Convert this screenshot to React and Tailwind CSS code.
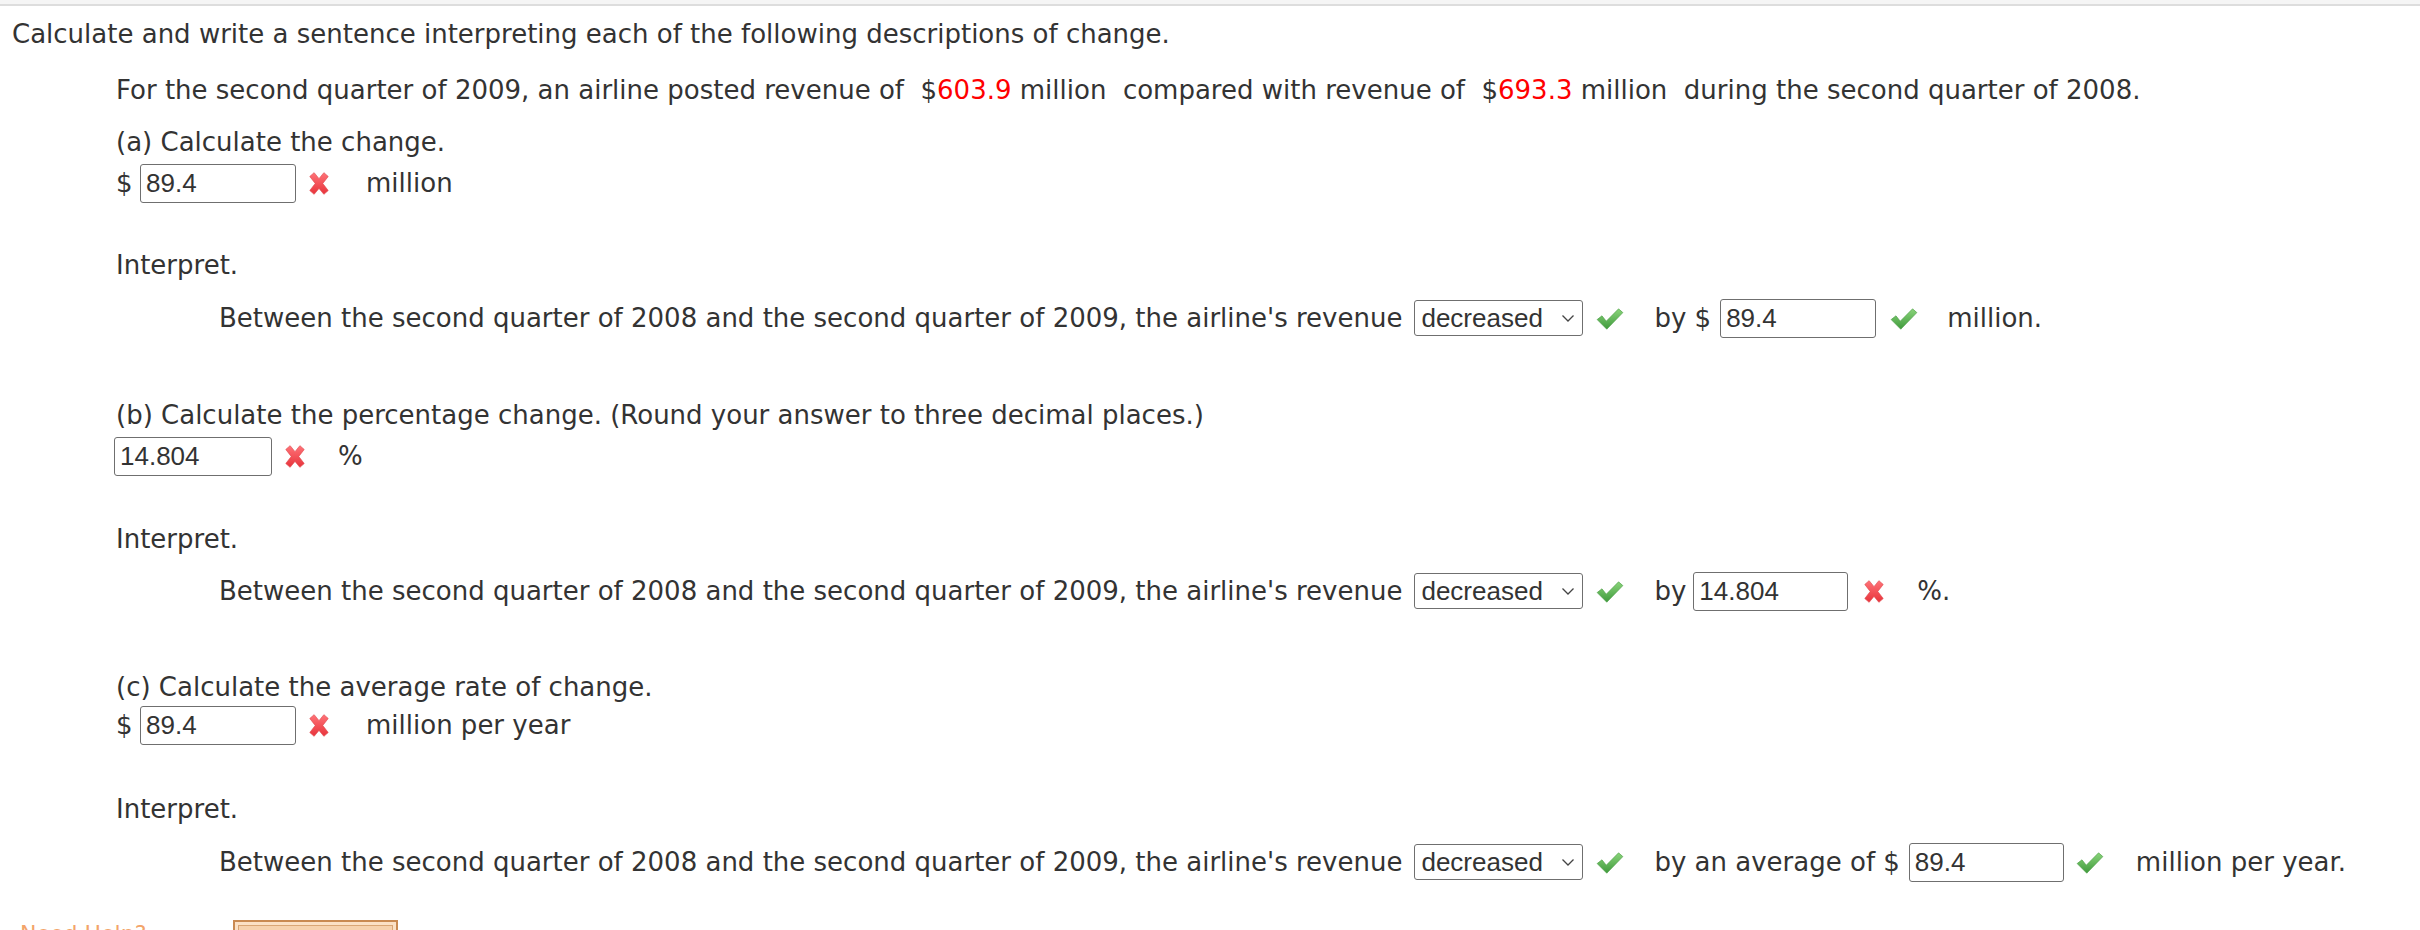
import React from "react";

const F = { fontFamily: '"DejaVu Sans", Verdana, sans-serif' };
const A = { fontFamily: '"Liberation Sans", Arial, sans-serif' };

function XIcon() {
  return (
    <svg width="26" height="27" viewBox="0 0 24 24" className="shrink-0">
      <defs>
        <linearGradient id="xg" x1="0" y1="0" x2="0" y2="1">
          <stop offset="0" stopColor="#ff7378" />
          <stop offset="1" stopColor="#e8333b" />
        </linearGradient>
      </defs>
      <path d="M3.5 5.5 L7.5 2 L12 7.5 L16.5 2 L20.5 5.5 L15.5 12 L20.5 18.5 L16.5 22 L12 16.5 L7.5 22 L3.5 18.5 L8.5 12 Z" fill="url(#xg)" stroke="#e0484e" strokeWidth="0.6" strokeLinejoin="round" />
    </svg>
  );
}

function CheckIcon() {
  return (
    <svg width="30" height="27" viewBox="0 0 28 24" className="shrink-0">
      <defs>
        <linearGradient id="cg" x1="0" y1="0" x2="0" y2="1">
          <stop offset="0" stopColor="#8ad47a" />
          <stop offset="1" stopColor="#3f9a3c" />
        </linearGradient>
      </defs>
      <path d="M2 13 L6.5 9.5 L10.5 14.5 L22 3 L26 6.5 L11 22 Z" fill="url(#cg)" stroke="#4b9e45" strokeWidth="0.6" strokeLinejoin="round" />
    </svg>
  );
}

function Input({ value, w = "w-[156px]" }) {
  return (
    <div
      className={`${w} h-[39px] border-[1.5px] border-[#6f6f6f] rounded-[3px] flex items-center pl-[5px] text-[26px] text-[#333] shrink-0 bg-white`}
      style={A}
    >
      {value}
    </div>
  );
}

function Select() {
  return (
    <div
      className="w-[169px] h-[36px] border-[1.5px] border-[#6f6f6f] rounded-[3px] flex items-center pl-[6px] pr-[7px] justify-between text-[26px] text-[#333] shrink-0 bg-white"
      style={A}
    >
      <span>decreased</span>
      <svg width="14" height="10" viewBox="0 0 14 10">
        <path d="M1.5 2.5 L7 8 L12.5 2.5" fill="none" stroke="#444" strokeWidth="1.3" />
      </svg>
    </div>
  );
}

const BETWEEN =
  "Between the second quarter of 2008 and the second quarter of 2009, the airline's revenue";

export default function App() {
  return (
    <div className="w-[2420px] min-h-[930px] bg-white text-[#333] text-[26px] overflow-hidden" style={F}>
      <div className="h-[4px] bg-[#f5f5f5]" />
      <div className="h-[2px] bg-[#dddddd]" />

      <div className="pl-[12px] mt-[12px] h-[32px] flex items-center whitespace-nowrap">
        Calculate and write a sentence interpreting each of the following descriptions of change.
      </div>

      <div className="pl-[116px]">
        <div className="mt-[24px] h-[32px] flex items-center whitespace-pre">
          {"For the second quarter of 2009, an airline posted revenue of  $"}
          <span className="text-[#ff0000]">603.9</span>
          {" million  compared with revenue of  $"}
          <span className="text-[#ff0000]">693.3</span>
          {" million  during the second quarter of 2008."}
        </div>

        {/* (a) */}
        <div className="mt-[20px] h-[32px] flex items-center">(a) Calculate the change.</div>
        <div className="mt-[4px] h-[42px] flex items-center">
          <span className="w-[24px]">$</span>
          <Input value="89.4" />
          <span className="ml-[10px]"><XIcon /></span>
          <span className="ml-[34px]">million</span>
        </div>

        <div className="mt-[45px] h-[32px] flex items-center">Interpret.</div>
        <div className="mt-[16px] h-[42px] flex items-center pl-[103px] whitespace-nowrap">
          <span>{BETWEEN}</span>
          <span className="ml-[12px]"><Select /></span>
          <span className="ml-[12px]"><CheckIcon /></span>
          <span className="ml-[29px]">by $</span>
          <span className="ml-[9px]"><Input value="89.4" w="w-[156px]" /></span>
          <span className="ml-[13px]"><CheckIcon /></span>
          <span className="ml-[28px]">million.</span>
        </div>

        {/* (b) */}
        <div className="mt-[60px] h-[32px] flex items-center whitespace-nowrap">
          (b) Calculate the percentage change. (Round your answer to three decimal places.)
        </div>
        <div className="mt-[4px] h-[42px] flex items-center -ml-[2px]">
          <Input value="14.804" w="w-[158px]" />
          <span className="ml-[10px]"><XIcon /></span>
          <span className="ml-[30px]">%</span>
        </div>

        <div className="mt-[46px] h-[32px] flex items-center">Interpret.</div>
        <div className="mt-[15px] h-[42px] flex items-center pl-[103px] whitespace-nowrap">
          <span>{BETWEEN}</span>
          <span className="ml-[12px]"><Select /></span>
          <span className="ml-[12px]"><CheckIcon /></span>
          <span className="ml-[29px]">by</span>
          <span className="ml-[7px]"><Input value="14.804" w="w-[155px]" /></span>
          <span className="ml-[13px]"><XIcon /></span>
          <span className="ml-[30px]">%.</span>
        </div>

        {/* (c) */}
        <div className="mt-[59px] h-[32px] flex items-center">(c) Calculate the average rate of change.</div>
        <div className="mt-[1px] h-[42px] flex items-center">
          <span className="w-[24px]">$</span>
          <Input value="89.4" />
          <span className="ml-[10px]"><XIcon /></span>
          <span className="ml-[34px]">million per year</span>
        </div>

        <div className="mt-[47px] h-[32px] flex items-center">Interpret.</div>
        <div className="mt-[16px] h-[42px] flex items-center pl-[103px] whitespace-nowrap">
          <span>{BETWEEN}</span>
          <span className="ml-[12px]"><Select /></span>
          <span className="ml-[12px]"><CheckIcon /></span>
          <span className="ml-[29px]">by an average of $</span>
          <span className="ml-[9px]"><Input value="89.4" w="w-[155px]" /></span>
          <span className="ml-[11px]"><CheckIcon /></span>
          <span className="ml-[31px]">million per year.</span>
        </div>
      </div>

      <div className="mt-[37px] pl-[20px] flex items-start h-[40px]">
        <span className="text-[#f3a46a] text-[22px] leading-[20px] pt-[4px] w-[213px]">Need Help?</span>
        <div className="w-[165px] h-[40px] border-2 border-[#c98a52] bg-[#fbe1c6] p-[3px]">
          <div className="w-full h-full border border-[#d9a676] bg-[#f6d2ae]" />
        </div>
      </div>
    </div>
  );
}
